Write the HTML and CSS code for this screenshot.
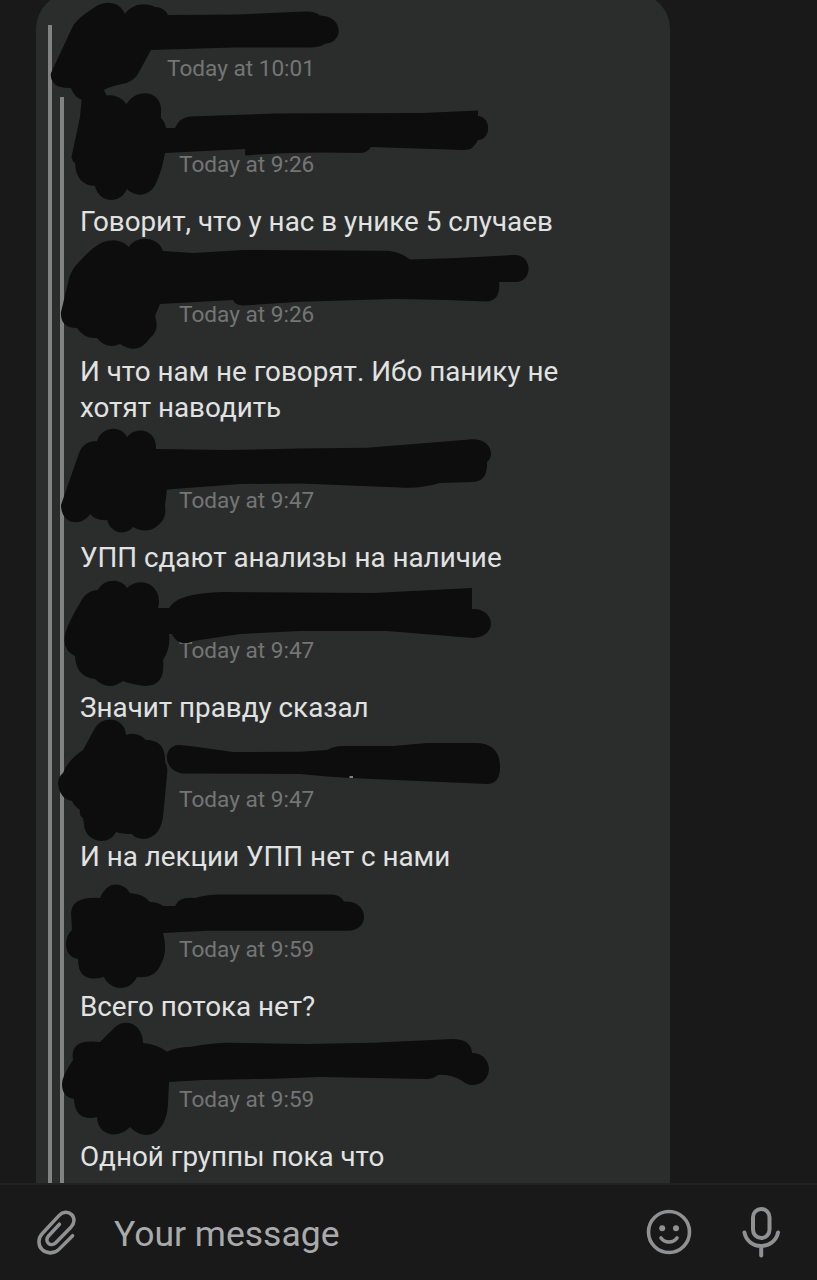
FILE: index.html
```
<!DOCTYPE html>
<html lang="ru">
<head>
    <meta charset="UTF-8">
    <meta name="viewport" content="width=device-width, initial-scale=1.0">
    <title>Chat</title>
    <link rel="stylesheet" href="styles.css">
</head>
<body>
    <main class="chat">
        <div class="bubble">
            <div class="forward outer">
                <div class="head"><time>Today at 10:01</time></div>

                <div class="forward inner">
                    <article class="message">
                        <div class="head"><time>Today at 9:26</time></div>
                        <p>Говорит, что у нас в унике 5 случаев</p>
                    </article>
                    <article class="message">
                        <div class="head"><time>Today at 9:26</time></div>
                        <p>И что нам не говорят. Ибо панику не хотят наводить</p>
                    </article>
                    <article class="message">
                        <div class="head"><time>Today at 9:47</time></div>
                        <p>УПП сдают анализы на наличие</p>
                    </article>
                    <article class="message">
                        <div class="head"><time>Today at 9:47</time></div>
                        <p>Значит правду сказал</p>
                    </article>
                    <article class="message">
                        <div class="head"><time>Today at 9:47</time></div>
                        <p>И на лекции УПП нет с нами</p>
                    </article>
                    <article class="message">
                        <div class="head"><time>Today at 9:59</time></div>
                        <p>Всего потока нет?</p>
                    </article>
                    <article class="message">
                        <div class="head"><time>Today at 9:59</time></div>
                        <p>Одной группы пока что</p>
                    </article>
                </div>
            </div>
        </div>

        <!-- marker strokes over avatars and names -->
        <svg class="marker" viewBox="0 0 817 1183" aria-hidden="true">
            <path d="M51 73L72 28Q75 20 92 9C104 -1 120 1 125 14C132 4 145 2 155 7Q164 7 168 15L237 14.500L305 11.500Q315 11 320 15.500C344 16 344 43 325 43.700Q320 47.500 310 47.500H233L151 50L139 72Q134 82 122 84Q108 87 104 90L107 97L82 100Q74 97 71 88Q56 88 53 82Q50 78 51 73Z"/>
            <path d="M82 96H104Q118 93 126.500 104C138 86 163 92 161 112V118Q165 122 166 128H175Q180 117 190 116.500L275 113.500L423 113L478 110.500V116C492 117 491 140 478 140Q473 151 463 150L371 147Q367 153 360 153Q300 151 245 155.500V149L165 153Q162 170 157 181C151 197 136 198 127 189C120 205 99 203 95 186Q76 185 75 163Q72 161 71.500 157L80 117Z"/>
            <path d="M61 312L68 283Q70 270 80 261Q96 243 107 241Q120 238 129 247C136 235 158 236 163 251L193 253L243 250L382 250.700Q398 250 410 259.500L457 258L513 255C532 253 534 280 517 282H499Q501 300 487 301.500Q430 299 393 299L300 301.700L243 305.500Q235 305 233 300L160 304L155 316Q160 330 150 338Q138 356 120 344Q107 350 97 338Q84 339 77 328Q60 328 61 312Z"/>
            <path d="M61 505L78 456Q82 441 97 441C102 426 121 425 127 437C137 425 157 430 156 449L227 450L300 448.500L367 447.700L467 439.700C490 436 496 455 487 462Q488 482 472 482L440 483Q420 489 400 487.500L300 483.500L240 484L167 489.500L165 505C167 520 160 523 156 527Q146 534 133 527C126 536 111 534 107 520Q96 521 90 514C81 528 61 524 61 505Z"/>
            <path d="M65 635Q67 624 83 598Q89 590 98 590C104 578 121 578 127 588C140 575 164 585 158 608H169Q177 593 223 592L373 593L472 588V609C496 608 498 637 473 638L387 631H300L240 634L193 641Q188 644 182 643Q175 641 172 634H169Q171 648 163 660Q166 686 145 686Q130 684 123 681Q108 692 95 679Q76 677 75 656Q62 650 65 635Z"/>
            <path d="M58 784Q58 777 63 773Q68 760 83 750L95 728C104 714 125 718 126 735Q137 731 146 740Q166 740 165 762Q168 766 167 775L163 817Q160 838 143 839Q134 838 132 834Q122 834 116 832C108 848 84 841 84 824L83 818Q79 816 80 810Q74 806 72 801Q60 799 58 784Z"/>
            <path d="M178 745Q186 745 232 752L300 751.700L327 750Q334 746 343 746L393 746L427 743H473Q500 742 500 767Q500 784 487 784L350 778L327 776.500L300 774L183 773.500C163 771 162 747 178 745Z"/>
            <path d="M66 943Q67 934 72 930L71 913Q72 896 100 898C107 881 122 881 130 893Q144 894 150 902Q158 902 163 906H175Q179 896 195 898Q204 895 217 894.500H333Q340 895 344 901.500C369 900 371 930 348 930.700H207L163 933Q168 951 161 964Q155 979 137 977C130 992 110 991 104 977Q78 984 78 959Q66 957 66 943Z"/>
            <path d="M62 1084Q62 1076 73 1060Q69 1038 100 1042L114 1028C125 1017 143 1024 143 1043Q157 1044 167 1051.700Q176 1047 190 1047Q210 1043 227 1042.700L307 1044L373 1042.700L453 1039Q471 1039 472 1053A16 16 0 1 1 462 1080.700Q450 1074 438 1075Q433 1079 427 1079L320 1077L273 1078.700L203 1080L169 1082L168 1104C166 1138 143 1141 130 1127C119 1139 98 1137 97 1117Q75 1122 74 1099Q62 1097 62 1084Z"/>
            <path class="speck" d="M349.500 777h3.500"/>
        </svg>
    </main>

    <footer class="composer">
        <svg class="icon clip" viewBox="0 0 42 48"><path d="M37.500 27.800L23.500 41.800C18.500 46.800 10.500 46.300 6.200 42C1.900 37.700 1.900 30.200 6.500 25.500L23.500 7.200C27.500 3 33 2.800 36.500 6.200C40 9.700 39.500 15 36 18.800L20.500 34.800C18 37.400 14.700 37.500 12.600 35.500C10.500 33.400 10.700 30.300 13 27.800L24 16"/></svg>
        <span class="placeholder">Your message</span>
        <svg class="icon smile" viewBox="0 0 48 48"><circle cx="24" cy="24" r="20.500"/><path d="M16 30C20 35.300 28 35.300 32 30"/><circle class="eye" cx="17.200" cy="20.300" r="3"/><circle class="eye" cx="31" cy="20.300" r="3"/></svg>
        <svg class="icon mic" viewBox="0 0 42 54"><rect x="13" y="4" width="16.500" height="29" rx="8.250"/><path d="M4.500 27.500C6 35.500 12.500 41 21 41S36.500 35.500 38 27.500M21.200 41v9.500"/></svg>
    </footer>
</body>
</html>
```
FILE: styles.css
```
* {
    box-sizing: border-box;
}

body {
    margin: 0;
    height: 1280px;
    display: flex;
    flex-direction: column;
    background: #191919;
    font-family: Roboto, "Noto Sans", sans-serif;
    overflow: hidden;
}

.chat {
    position: relative;
    height: 1183px;
    overflow: hidden;
}

.bubble {
    width: 634px;
    height: 1190px;
    margin: -7px 0 0 36px;
    padding: 32px 12px 0;
    background: #2b2d2d;
    border-radius: 36px 36px 0 0;
}

.forward {
    border-left: 4px solid #828282;
}

.outer {
    height: 1158px;
    padding-left: 8px;
}

.inner {
    height: 1086px;
    padding-left: 16px;
}

.outer > .head {
    height: 72px;
    padding: 30px 0 0 107px;
}

.message {
    padding-bottom: 6.1px;
}

.message .head {
    height: 107px;
    padding: 54px 0 0 99px;
}

time {
    display: block;
    color: #747575;
    font-size: 22.6px;
    line-height: 28px;
}

.message p {
    width: 500px;
    margin: 0;
    color: #e1e2e2;
    font-size: 27.8px;
    line-height: 36.6px;
}

.marker {
    position: absolute;
    top: 0;
    left: 0;
    width: 817px;
    height: 1183px;
    fill: #0c0d0c;
}

.speck {
    stroke: #a5a5a5;
    stroke-width: 1.5;
}

.composer {
    height: 97px;
    display: flex;
    align-items: center;
    padding: 0 35px 2px 36px;
    border-top: 2px solid #212323;
    background: #191919;
}

.icon {
    flex: none;
    fill: none;
    stroke: #909193;
    stroke-width: 4;
    stroke-linecap: round;
    stroke-linejoin: round;
}

.clip {
    width: 41px;
    height: 48px;
    stroke-width: 3.6;
}

.placeholder {
    flex: 1;
    margin-left: 37px;
    padding-top: 4px;
    color: #a9aaac;
    font-size: 35.5px;
    line-height: 38px;
}

.smile {
    width: 48px;
    height: 48px;
    margin-right: 47px;
    stroke-width: 3.6;
}

.eye {
    fill: #909193;
    stroke: none;
}

.mic {
    width: 42px;
    height: 54px;
}
```
